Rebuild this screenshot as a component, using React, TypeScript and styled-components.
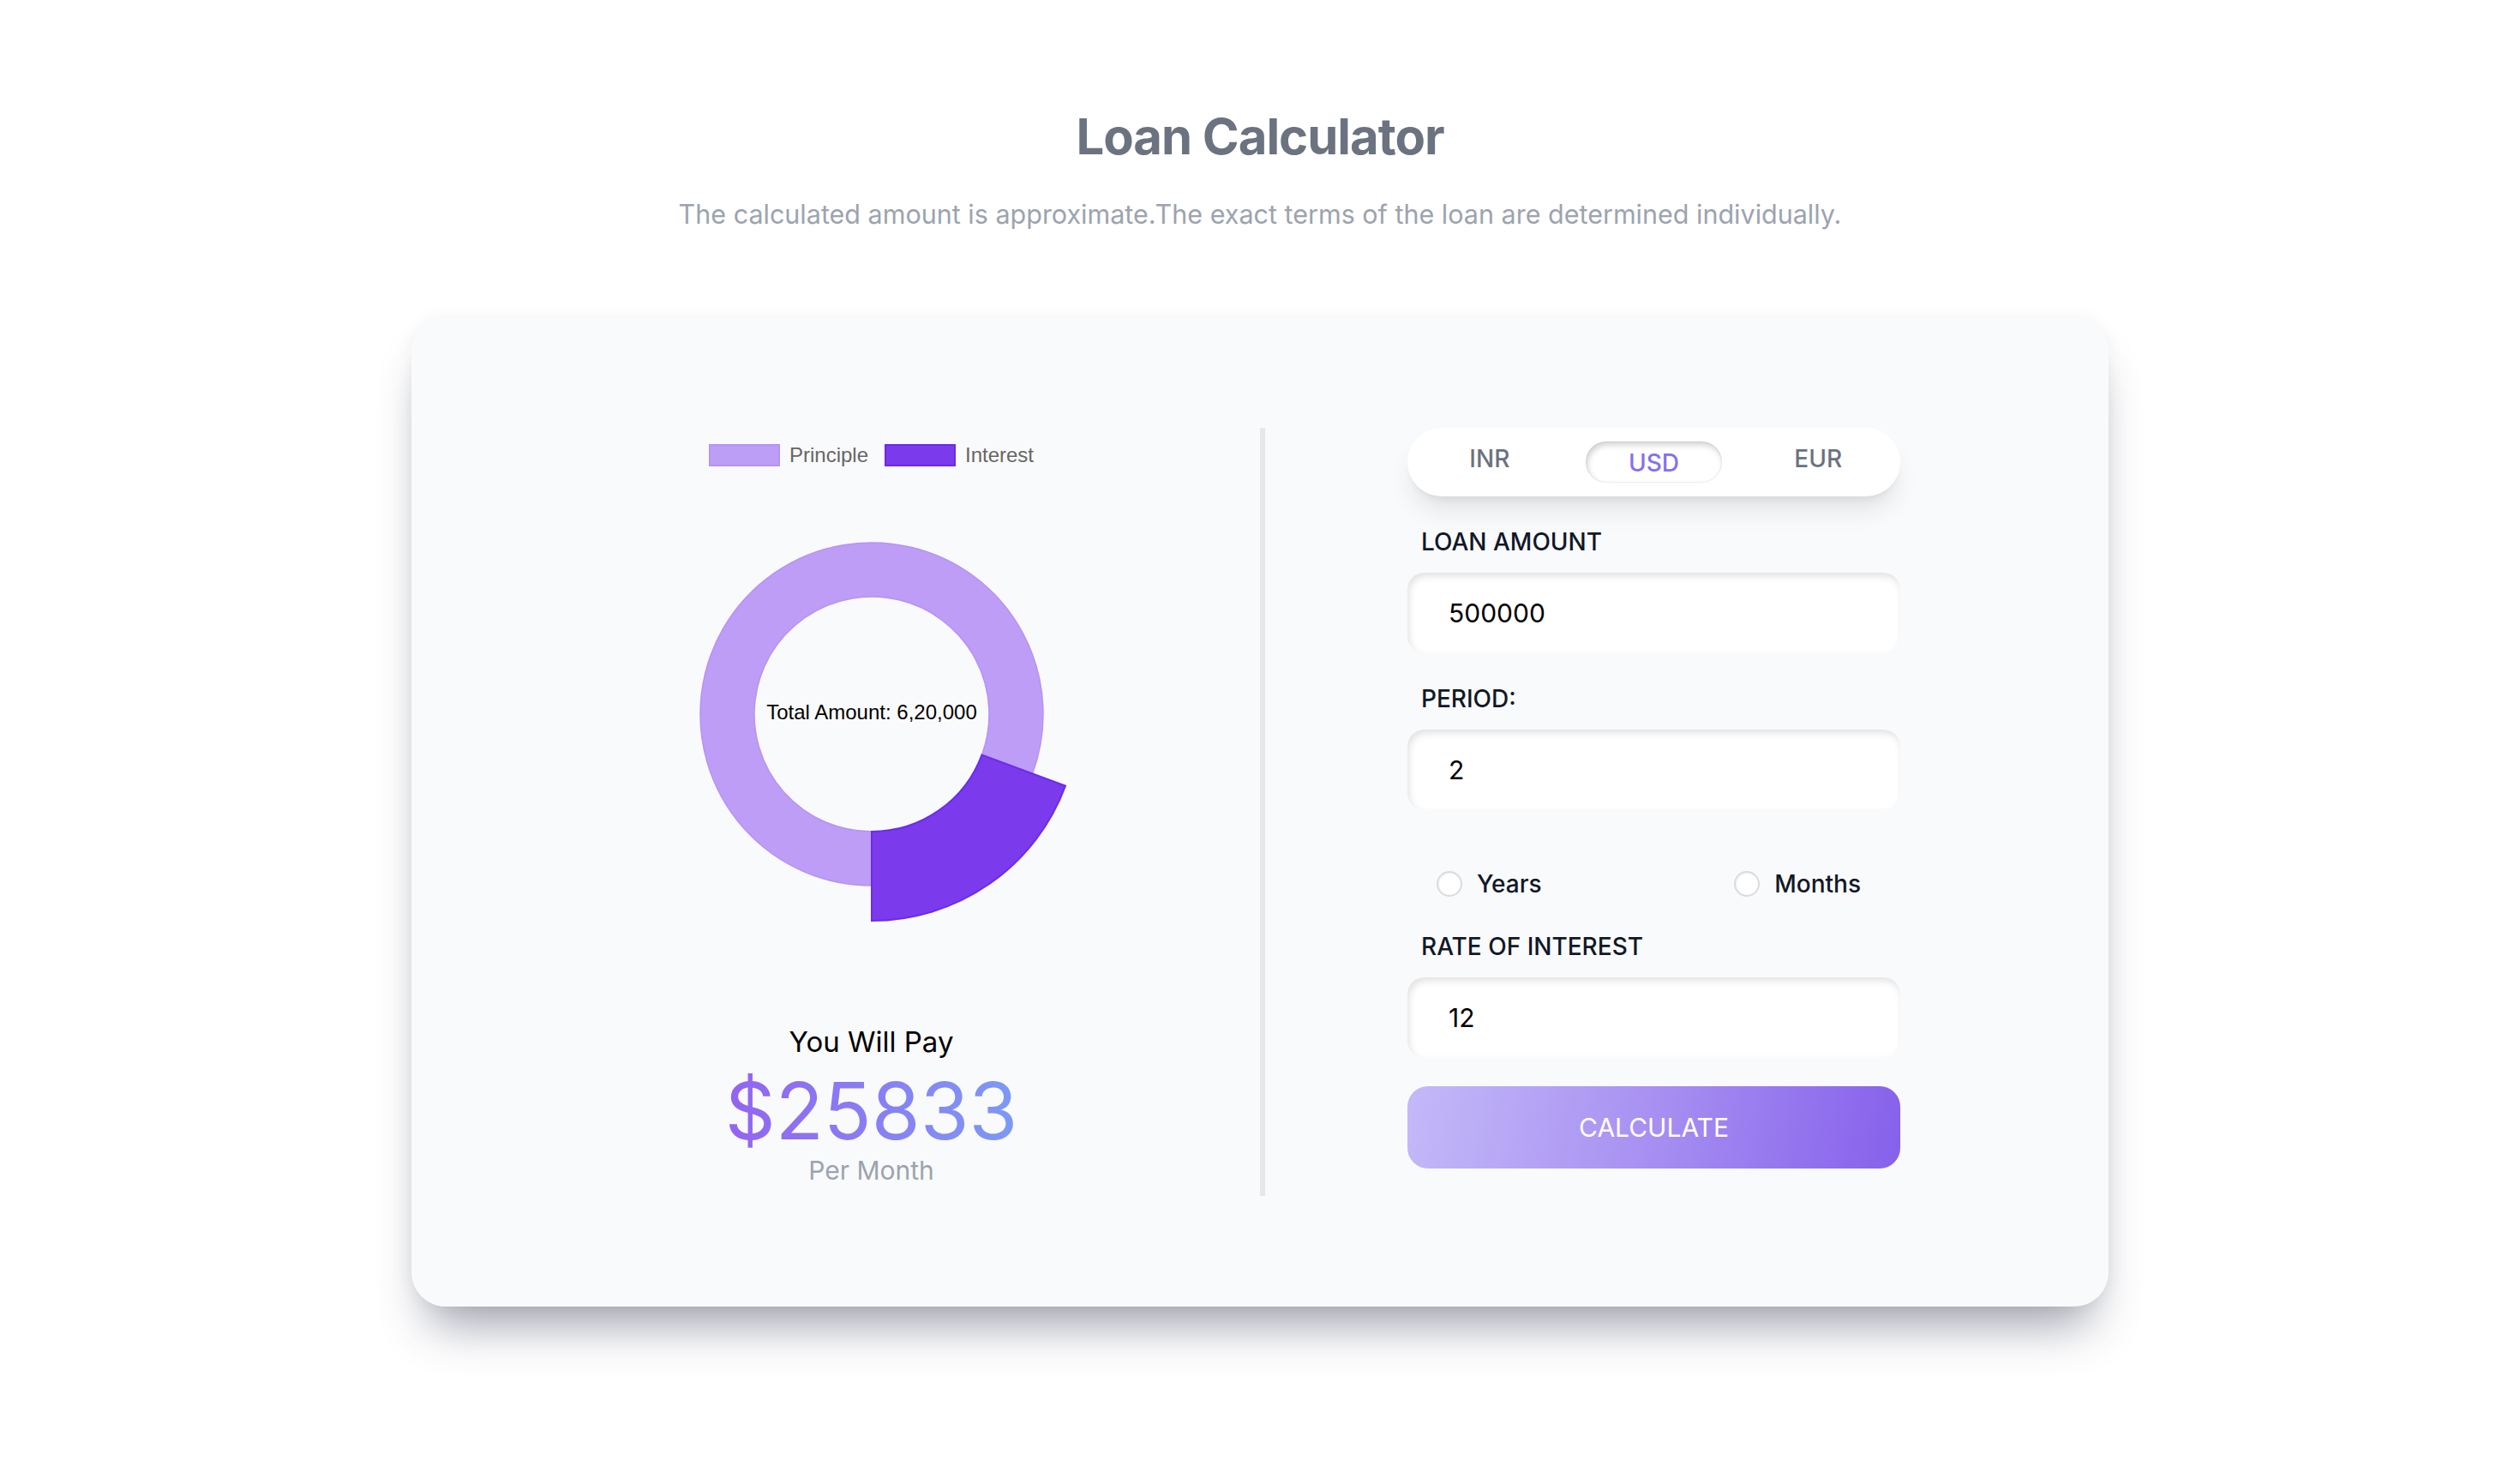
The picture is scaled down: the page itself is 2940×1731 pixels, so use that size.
import React from "react";
import styled, { createGlobalStyle } from "styled-components";

const GlobalStyle = createGlobalStyle`
  html, body { margin: 0; padding: 0; background: #ffffff; }
  body { font-family: Inter, "Noto Sans", sans-serif; -webkit-font-smoothing: antialiased; }
  * { box-sizing: border-box; }
`;

const Page = styled.div`
  min-height: 1731px;
  padding-top: 123px;
  display: flex;
  flex-direction: column;
  align-items: center;
`;

const Title = styled.h1`
  margin: 0;
  font-size: 58px;
  line-height: 72px;
  font-weight: 700;
  letter-spacing: -1px;
  color: #6b7280;
`;

const Subtitle = styled.p`
  margin: 35px 0 0;
  font-size: 30.5px;
  line-height: 40px;
  color: #9ca3af;
`;

const Card = styled.section`
  width: 1980px;
  margin-top: 100px;
  padding: 129px 77px 129px 83px;
  background: #f9fafb;
  border-radius: 40px;
  box-shadow: 0 40px 56px -20px rgba(40, 44, 70, 0.45), 0 0 20px rgba(0, 0, 0, 0.05);
`;

const Columns = styled.div`
  display: grid;
  grid-template-columns: 1fr 6px 1fr;
`;

const Divider = styled.div`
  background: #e5e7eb;
`;

const ChartColumn = styled.div`
  display: flex;
  flex-direction: column;
  align-items: center;
  padding: 18px 0 10px;
`;

const Legend = styled.div`
  display: flex;
  align-items: center;
  gap: 19px;
  font-family: "Liberation Sans", Arial, sans-serif;
  font-size: 24px;
  color: #666666;
`;

const LegendItem = styled.div`
  display: flex;
  align-items: center;
  gap: 11px;
`;

const Swatch = styled.span<{ $fill: string; $stroke: string }>`
  width: 83px;
  height: 26px;
  background: ${(p) => p.$fill};
  border: 2px solid ${(p) => p.$stroke};
`;

const DonutSvg = styled.svg`
  margin-top: 38px;
  overflow: visible;
  display: block;
`;

const PayLabel = styled.div`
  margin-top: 110px;
  font-size: 33px;
  line-height: 44px;
  color: #000000;
`;

const Amount = styled.div`
  margin-top: 13px;
  font-size: 92px;
  line-height: 92px;
  font-weight: 400;
  background: linear-gradient(90deg, #9463f1 0%, #7c9af5 100%);
  -webkit-background-clip: text;
  background-clip: text;
  color: transparent;
`;

const PerMonth = styled.div`
  margin-top: 3px;
  font-size: 30px;
  line-height: 40px;
  color: #9ca3af;
`;

const FormColumn = styled.div`
  display: flex;
  justify-content: center;
`;

const Form = styled.form`
  width: 575px;
  display: flex;
  flex-direction: column;
`;

const Toggle = styled.div`
  height: 80px;
  border-radius: 40px;
  background: #ffffff;
  display: grid;
  grid-template-columns: repeat(3, 1fr);
  align-items: center;
  justify-items: center;
  box-shadow: 0 20px 30px -6px rgba(0, 0, 0, 0.1), 0 8px 12px -8px rgba(0, 0, 0, 0.1);
`;

const CurrencyOption = styled.button<{ $active?: boolean }>`
  border: none;
  font-family: inherit;
  font-size: 28px;
  font-weight: 500;
  width: 159px;
  height: 48px;
  border-radius: 24px;
  padding: ${(p) => (p.$active ? "2px 0 0" : "0 0 8px")};
  background: #ffffff;
  color: ${(p) => (p.$active ? "#8470f0" : "#6b7280")};
  box-shadow: ${(p) =>
    p.$active ? "inset 2px 4px 7px rgba(0, 0, 0, 0.18), inset 0 0 0 1px rgba(0,0,0,0.06)" : "none"};
`;

const Label = styled.label`
  margin-top: 33px;
  padding-left: 16px;
  font-size: 28px;
  line-height: 40px;
  font-weight: 500;
  color: #111827;
`;

const Input = styled.input`
  margin-top: 16px;
  width: 100%;
  height: 94px;
  border: none;
  outline: none;
  border-radius: 20px;
  padding: 0 48px;
  background: #ffffff;
  font-family: inherit;
  font-size: 30px;
  color: #000000;
  box-shadow: inset 2px 4px 8px rgba(0, 0, 0, 0.12);
`;

const RadioRow = styled.div`
  margin-top: 66px;
  height: 40px;
  display: flex;
  align-items: center;
  justify-content: space-between;
  padding: 0 46px 0 34px;
`;

const RadioOption = styled.label`
  display: flex;
  align-items: center;
  gap: 17px;
  font-size: 28px;
  font-weight: 500;
  color: #111827;
`;

const Radio = styled.input`
  appearance: none;
  margin: 0;
  width: 30px;
  height: 30px;
  border-radius: 50%;
  border: 2px solid #d9dbe0;
  background: #ffffff;
  box-shadow: inset 1px 1px 2px rgba(0, 0, 0, 0.06);
`;

const CalculateButton = styled.button`
  margin-top: 33px;
  width: 100%;
  height: 96px;
  border: none;
  border-radius: 24px;
  background: linear-gradient(100deg, #c4b9f8 0%, #aa94f2 45%, #8660eb 100%);
  color: #ffffff;
  font-family: inherit;
  font-size: 30px;
  font-weight: 400;
`;

const C = 250;
const pt = (r: number, deg: number) => {
  const a = (deg * Math.PI) / 180;
  return `${(C + r * Math.sin(a)).toFixed(2)} ${(C - r * Math.cos(a)).toFixed(2)}`;
};
const sector = (r0: number, r1: number, a0: number, a1: number) => {
  const large = a1 - a0 > 180 ? 1 : 0;
  return `M ${pt(r1, a0)} A ${r1} ${r1} 0 ${large} 1 ${pt(r1, a1)} L ${pt(r0, a1)} A ${r0} ${r0} 0 ${large} 0 ${pt(r0, a0)} Z`;
};

const principal = 500000;
const interest = 120000;
const principalSweep = (principal / (principal + interest)) * 360;

function Donut() {
  return (
    <DonutSvg width={500} height={500} viewBox="0 0 500 500">
      <path d={sector(137, 200, 180, 180 + principalSweep)} fill="#bd9df6" stroke="#b692f6" strokeWidth={1.5} />
      <path d={sector(137, 241, principalSweep - 180, 180)} fill="#7c3aed" stroke="#6a2cf0" strokeWidth={2} />
      <text
        x={C}
        y={C}
        textAnchor="middle"
        dominantBaseline="middle"
        fontFamily="'Liberation Sans', Arial, sans-serif"
        fontSize={24}
        fill="#000"
      >
        Total Amount: 6,20,000
      </text>
    </DonutSvg>
  );
}

export default function App() {
  return (
    <>
      <GlobalStyle />
      <Page>
        <Title>Loan Calculator</Title>
        <Subtitle>
          The calculated amount is approximate.The exact terms of the loan are determined individually.
        </Subtitle>
        <Card>
          <Columns>
            <ChartColumn>
              <Legend>
                <LegendItem>
                  <Swatch $fill="#bd9ef7" $stroke="#b592f6" />
                  Principle
                </LegendItem>
                <LegendItem>
                  <Swatch $fill="#7c3aed" $stroke="#6d28f0" />
                  Interest
                </LegendItem>
              </Legend>
              <Donut />
              <PayLabel>You Will Pay</PayLabel>
              <Amount>$25833</Amount>
              <PerMonth>Per Month</PerMonth>
            </ChartColumn>
            <Divider />
            <FormColumn>
              <Form onSubmit={(e) => e.preventDefault()}>
                <Toggle>
                  <CurrencyOption type="button">INR</CurrencyOption>
                  <CurrencyOption type="button" $active>
                    USD
                  </CurrencyOption>
                  <CurrencyOption type="button">EUR</CurrencyOption>
                </Toggle>
                <Label>LOAN AMOUNT</Label>
                <Input defaultValue="500000" />
                <Label>PERIOD:</Label>
                <Input defaultValue="2" />
                <RadioRow>
                  <RadioOption>
                    <Radio type="radio" name="period" />
                    Years
                  </RadioOption>
                  <RadioOption>
                    <Radio type="radio" name="period" />
                    Months
                  </RadioOption>
                </RadioRow>
                <Label>RATE OF INTEREST</Label>
                <Input defaultValue="12" />
                <CalculateButton type="submit">CALCULATE</CalculateButton>
              </Form>
            </FormColumn>
          </Columns>
        </Card>
      </Page>
    </>
  );
}
